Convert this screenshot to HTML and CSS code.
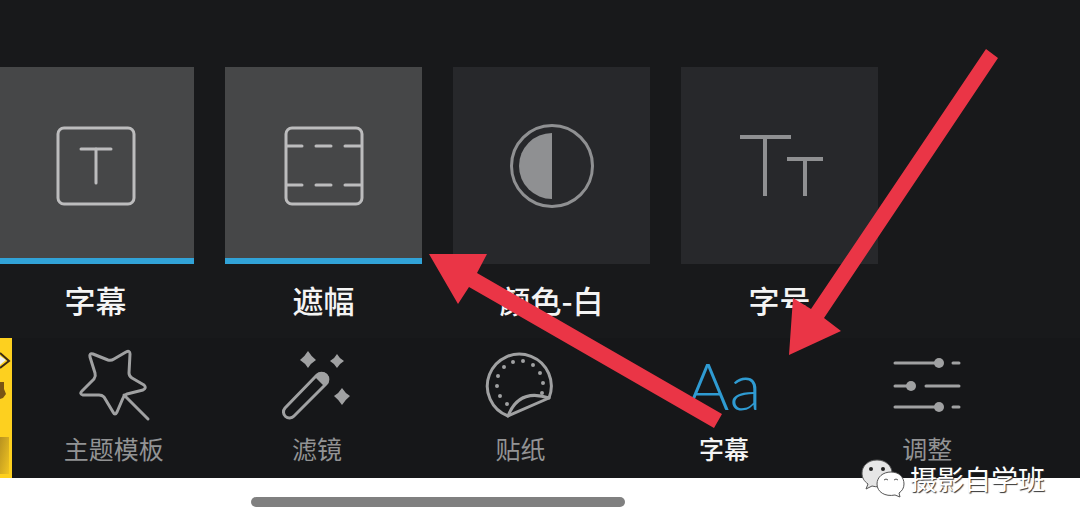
FILE: index.html
```html
<!DOCTYPE html>
<html lang="zh-CN">
<head>
  <meta charset="UTF-8">
  <meta name="viewport" content="width=device-width, initial-scale=1">
  <title>字幕</title>
  <link rel="stylesheet" href="styles.css">
</head>
<body>

  <main class="editor">

    <div class="options">
      <button class="option active" type="button">
        <span class="tile">
          <svg class="tile-icon" viewBox="0 0 90 90" aria-hidden="true">
            <rect x="7" y="7" width="76" height="76" rx="6"/>
            <line x1="30" y1="28" x2="60" y2="28"/>
            <line x1="45" y1="28" x2="45" y2="62"/>
          </svg>
        </span>
        <span class="option-name">字幕</span>
      </button>

      <button class="option active" type="button">
        <span class="tile">
          <svg class="tile-icon" viewBox="0 0 90 90" aria-hidden="true">
            <rect x="7" y="7" width="76" height="76" rx="6"/>
            <path d="M8 25H23M37 25H52M66 25H82M8 64H23M37 64H52M66 64H82"/>
          </svg>
        </span>
        <span class="option-name">遮幅</span>
      </button>

      <button class="option" type="button">
        <span class="tile">
          <svg class="tile-icon" viewBox="0 0 90 90" aria-hidden="true">
            <circle cx="45" cy="45" r="40.5"/>
            <path class="solid" d="M45 12A33 33 0 0 0 45 78Z"/>
          </svg>
        </span>
        <span class="option-name">颜色-白</span>
      </button>

      <button class="option" type="button">
        <span class="tile">
          <svg class="tile-icon square-ends" viewBox="0 0 90 90" aria-hidden="true">
            <line x1="5" y1="16" x2="56" y2="16"/>
            <line x1="30" y1="16" x2="30" y2="75"/>
            <line x1="52" y1="38" x2="88" y2="38"/>
            <line x1="70" y1="38" x2="70" y2="75"/>
          </svg>
        </span>
        <span class="option-name">字号</span>
      </button>
    </div>

    <div class="toolbar">
      <svg class="promo" viewBox="0 0 12 141" aria-hidden="true">
        <defs>
          <linearGradient id="shade" x1="0" y1="0" x2="1" y2="1">
            <stop offset="0" stop-color="#b8921f"/>
            <stop offset="1" stop-color="#f0c422"/>
          </linearGradient>
        </defs>
        <path class="promo-white" d="M0 18L6 22L0 27Z"/>
        <path class="promo-line" d="M0 15L9 23L0 30"/>
        <path class="promo-brown" d="M0 44H4V51L6 56L3 60L0 61Z"/>
        <rect fill="url(#shade)" y="99" width="9" height="37"/>
      </svg>

      <nav class="tabs">
        <button class="tab" type="button">
          <svg class="tab-icon" viewBox="0 0 80 80" aria-hidden="true">
            <path d="M16 15Q15 11 19 12L34 18Q37 19 40 17L52 10Q56 8 56 12L55 31Q55 34 58 36L70 43Q73 46 69 48L53 52Q50 53 49 56L43 70Q41 74 39 70L30 55Q28 53 25 53L9 53Q5 52 8 49L20 37Q22 34 21 31Z"/>
            <path d="M50 53L74 77"/>
          </svg>
          <span>主题模板</span>
        </button>

        <button class="tab" type="button">
          <svg class="tab-icon" viewBox="0 0 80 80" aria-hidden="true">
            <path d="M8 66L40 33A6 6 0 0 1 49 42L17 74A6 6 0 0 1 8 66Z"/>
            <path class="solid" d="M38 35L41 32A6 6 0 0 1 50 41L47 44Z"/>
            <path class="solid" d="M31 9Q34 14 39 18Q34 21 31 26Q28 21 23 18Q28 14 31 9ZM60 12Q62 16 67 19Q62 22 60 26Q58 22 53 19Q58 16 60 12ZM65 46Q68 51 73 54Q68 58 65 63Q62 58 57 54Q62 51 65 46Z"/>
          </svg>
          <span>滤镜</span>
        </button>

        <button class="tab" type="button">
          <svg class="tab-icon" viewBox="0 0 80 80" aria-hidden="true">
            <path d="M28 74A32 32 0 1 1 69 56Z"/>
            <path d="M28 74Q39 46 69 56"/>
            <path class="dots" d="M17 44h0M18 34h0M24 25h0M33 20h0M43 19h0M53 23h0M60 31h0M63 41h0M62 51h0M20 54h0M27 62h0"/>
          </svg>
          <span>贴纸</span>
        </button>

        <button class="tab current" type="button">
          <span class="tab-icon letters" aria-hidden="true">Aa</span>
          <span>字幕</span>
        </button>

        <button class="tab" type="button">
          <svg class="tab-icon" viewBox="0 0 80 80" aria-hidden="true">
            <path d="M8 21H52M66 21H72M8 44H24M39 44H72M8 65H52M66 65H72"/>
            <g class="solid">
              <circle cx="52" cy="21" r="5"/>
              <circle cx="24" cy="44" r="5"/>
              <circle cx="52" cy="65" r="5"/>
            </g>
          </svg>
          <span>调整</span>
        </button>
      </nav>
    </div>

    <!-- pointers drawn over the controls -->
    <svg class="arrows" viewBox="0 0 1080 529" aria-hidden="true">
      <path d="M429 254H487L477 273L722 414L714 428L469 287L458 304Z"/>
      <path d="M789 355L793 298L811 309L986 49L998 58L824 318L841 331Z"/>
    </svg>
  </main>

  <footer class="system-bar">
    <div class="home-indicator"></div>
  </footer>

  <div class="watermark">
    <svg class="wechat" viewBox="0 0 44 40" aria-hidden="true">
      <path class="bubble-back" d="M16 1C7 1 1 7 1 14C1 19 3 22 7 25L5 30L11 27C21 30 31 24 31 14C31 7 25 1 16 1Z"/>
      <path class="bubble-front" d="M30 13C22 13 16 18 16 25C16 33 24 38 34 36L39 38L38 34C41 32 43 29 43 25C43 18 38 13 30 13Z"/>
      <circle cx="10" cy="10" r="2"/>
      <circle cx="22" cy="10" r="2"/>
      <path class="eyes" d="M23 21q2 -2 4 0M33 21q2 -2 4 0"/>
    </svg>
    <span>摄影自学班</span>
  </div>

</body>
</html>
```
FILE: styles.css
```css
* {
  box-sizing: border-box;
}

body {
  margin: 0;
  position: relative;
  background: #fff;
  font-family: "Noto Sans CJK SC", sans-serif;
  overflow-x: hidden;
}

button {
  padding: 0;
  border: 0;
  background: none;
  color: inherit;
  font: inherit;
}

svg {
  display: block;
}

.editor {
  position: relative;
  padding-top: 67px;
  background: #18191b;
  overflow: hidden;
}

/* option tiles */
.options {
  display: flex;
  gap: 31px;
  margin-left: -3px;
}

.option {
  flex: none;
  width: 197px;
  color: #f4f4f4;
}

.tile {
  display: flex;
  align-items: center;
  justify-content: center;
  height: 197px;
  background: #27282b;
}

.active .tile {
  background: #464748;
  box-shadow: inset 0 -6px #31a3d8;
}

.tile-icon {
  width: 90px;
  height: 90px;
  fill: none;
  stroke: #8f9092;
  stroke-width: 3;
  stroke-linecap: round;
}

.active .tile-icon {
  stroke: #bcbcbd;
}

.square-ends {
  stroke-width: 4;
  stroke-linecap: butt;
}

.tile-icon .solid {
  fill: #8f9092;
  stroke: none;
}

.option-name {
  display: block;
  margin: 14px 0 16px;
  font-size: 31px;
  font-weight: 500;
  line-height: 44px;
}

/* bottom toolbar */
.toolbar {
  display: flex;
  height: 140px;
  background: #161719;
}

.promo {
  flex: none;
  width: 12px;
  height: 141px;
  background: #fdd01f;
}

.promo-white {
  fill: #eee;
}

.promo-line {
  fill: none;
  stroke: #3b2a14;
  stroke-width: 2;
}

.promo-brown {
  fill: #7a5414;
}

.tabs {
  flex: 1;
  display: grid;
  grid-template-columns: repeat(5, 1fr);
  padding-right: 51px;
}

.tab {
  display: flex;
  flex-direction: column;
  align-items: center;
  gap: 8px;
  padding-top: 4px;
  color: #929394;
  font-size: 25px;
  line-height: 36px;
}

.tab-icon {
  width: 80px;
  height: 80px;
  fill: none;
  stroke: #a0a1a2;
  stroke-width: 3;
  stroke-linecap: round;
  stroke-linejoin: round;
}

.tab-icon .solid {
  fill: #a0a1a2;
  stroke: none;
}

.tab-icon .dots {
  stroke-width: 4;
}

.current {
  color: #f4f4f4;
  font-weight: 500;
}

.letters {
  color: #2f9bd2;
  font-family: Lato, sans-serif;
  font-weight: 300;
  font-size: 66px;
  line-height: 86px;
}

.arrows {
  position: absolute;
  top: 0;
  left: 0;
  width: 1080px;
  height: 529px;
  fill: #ea3546;
  pointer-events: none;
}

.system-bar {
  padding: 19px 0 22px;
}

.home-indicator {
  width: 374px;
  height: 10px;
  margin-left: 251px;
  border-radius: 5px;
  background: #808080;
}

.watermark {
  position: absolute;
  right: 35px;
  bottom: 30px;
  display: flex;
  align-items: center;
  gap: 5px;
  color: #fff;
  font-size: 27px;
  line-height: 40px;
  text-shadow: 1px 1px 1px #333;
}

.wechat {
  width: 44px;
  height: 40px;
  fill: #222;
}

.bubble-back {
  fill: #e6e6e6;
  stroke: #555;
}

.bubble-front {
  fill: #fff;
  stroke: #555;
}

.eyes {
  fill: none;
  stroke: #555;
}
```
